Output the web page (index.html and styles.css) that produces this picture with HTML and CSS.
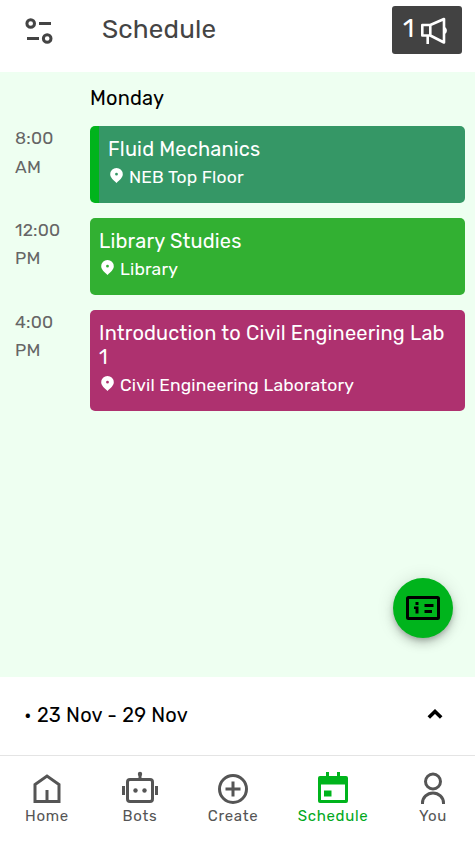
FILE: index.html
```html
<!DOCTYPE html>
<html lang="en">
<head>
	<meta charset="UTF-8">
	<title>Schedule</title>
	<meta name="viewport" content="width=device-width, initial-scale=1.0">
	<link rel="stylesheet" href="styles.css">
</head>
<body>

	<header class="topbar">
		<svg class="filter-icon" width="28" height="28" viewBox="0 0 28 28" fill="none" stroke="#444" stroke-width="3">
			<circle cx="5.7" cy="6.5" r="3.8"/>
			<path d="M14 6.5h12M2 21.5h12"/>
			<circle cx="22.2" cy="21.5" r="3.8"/>
		</svg>
		<h1>Schedule</h1>
		<button class="notices">
			<span>1</span>
			<svg width="28" height="28" viewBox="0 0 28 28" fill="none" stroke="#fff" stroke-width="2.6">
				<path d="M2.300 9h8v10.500h-8zM10.300 9l13.700-6v23.500l-13.700-7M7.700 19.500v8.500" stroke-linejoin="round"/>
				<path d="M24.500 11c3.200 1 3.200 6 0 7z" fill="#fff" stroke="none"/>
			</svg>
		</button>
	</header>

	<main class="schedule">
		<h2>Monday</h2>

		<div class="slot morning">
			<div class="time">8:00<br>AM</div>
			<div class="lesson teal current">
				<h3>Fluid Mechanics</h3>
				<p class="place">
					<svg class="pin" viewBox="0 0 13 15"><path d="M6.500 0a6.300 6.300 0 0 1 6.300 6.300c0 3.200-3 5.700-6.300 8.700c-3.300-3-6.300-5.500-6.300-8.700a6.300 6.300 0 0 1 6.300-6.300zM6.500 4.800a1.400 1.400 0 1 0 0 2.800a1.400 1.400 0 0 0 0-2.800z"/></svg>
					<span>NEB Top Floor</span>
				</p>
			</div>
		</div>

		<div class="slot">
			<div class="time">12:00<br>PM</div>
			<div class="lesson green">
				<h3>Library Studies</h3>
				<p class="place">
					<svg class="pin" viewBox="0 0 13 15"><path d="M6.500 0a6.300 6.300 0 0 1 6.300 6.300c0 3.200-3 5.700-6.300 8.700c-3.300-3-6.300-5.500-6.300-8.700a6.300 6.300 0 0 1 6.300-6.300zM6.500 4.800a1.400 1.400 0 1 0 0 2.800a1.400 1.400 0 0 0 0-2.800z"/></svg>
					<span>Library</span>
				</p>
			</div>
		</div>

		<div class="slot">
			<div class="time">4:00<br>PM</div>
			<div class="lesson berry">
				<h3>Introduction to Civil Engineering Lab 1</h3>
				<p class="place">
					<svg class="pin" viewBox="0 0 13 15"><path d="M6.500 0a6.300 6.300 0 0 1 6.300 6.300c0 3.200-3 5.700-6.300 8.700c-3.300-3-6.300-5.500-6.300-8.700a6.300 6.300 0 0 1 6.300-6.300zM6.500 4.800a1.400 1.400 0 1 0 0 2.800a1.400 1.400 0 0 0 0-2.800z"/></svg>
					<span>Civil Engineering Laboratory</span>
				</p>
			</div>
		</div>

		<button class="fab">
			<svg width="34" height="24" viewBox="0 0 34 24">
				<rect x="1.500" y="1.500" width="31" height="21" rx="1" fill="none" stroke="#000" stroke-width="3"/>
				<path d="M9.500 6h3v3h-3zM8 10.500h4.500v7h-3v-4.500h-1.500zM18.500 8h9v3h-9zM18.500 14h7.500v3h-7.500z"/>
			</svg>
		</button>
	</main>

	<section class="week">
		<span>• 23 Nov - 29 Nov</span>
		<svg width="16" height="12" viewBox="0 0 16 12" fill="none" stroke="#000" stroke-width="3.600">
			<path d="M1.800 8.500l6.200-6 6.200 6"/>
		</svg>
	</section>

	<nav class="tabs">
		<a class="tab">
			<svg viewBox="0 0 36 36" fill="none" stroke="#555" stroke-width="3">
				<path d="M6 32.500v-17l12-8.500 12 8.500v17zM18 32v-11"/>
			</svg>
			<span>Home</span>
		</a>
		<a class="tab bots">
			<svg viewBox="0 0 36 36" fill="none" stroke="#555" stroke-width="3">
				<rect x="5.500" y="10.500" width="25" height="22" rx="2.500"/>
				<path d="M18 10v-5M1.500 17v9M34.500 17v9"/>
				<g fill="#555" stroke="none">
					<circle cx="18" cy="5" r="2.200"/>
					<circle cx="13.500" cy="21.500" r="2.200"/>
					<circle cx="22.500" cy="21.500" r="2.200"/>
				</g>
			</svg>
			<span>Bots</span>
		</a>
		<a class="tab">
			<svg viewBox="0 0 36 36" fill="none" stroke="#555" stroke-width="3">
				<circle cx="18" cy="20" r="13.500"/>
				<path d="M18 12.500v15M10.500 20h15"/>
			</svg>
			<span>Create</span>
		</a>
		<a class="tab active">
			<svg viewBox="0 0 36 36" fill="#00b41c">
				<path fill-rule="evenodd" d="M5 7h6v-4h3v4h8v-4h3v4h6a2 2 0 0 1 2 2v23a2 2 0 0 1-2 2h-26a2 2 0 0 1-2-2v-23a2 2 0 0 1 2-2zM6 15.500v15.500h24v-15.500z"/>
				<path d="M9 21.500h7.500v6h-7.500z"/>
			</svg>
			<span>Schedule</span>
		</a>
		<a class="tab">
			<svg viewBox="0 0 36 36" fill="none" stroke="#555" stroke-width="3">
				<circle cx="18" cy="12.500" r="7.500"/>
				<path d="M7.500 35v-1a10.500 10 0 0 1 21 0v1"/>
			</svg>
			<span>You</span>
		</a>
	</nav>

</body>
</html>
```
FILE: styles.css
```css
* {
	box-sizing: border-box;
	margin: 0;
	padding: 0;
}

body {
	display: flex;
	flex-direction: column;
	height: 851px;
	background: #fff;
	color: #000;
	font-family: Rubik, Roboto, sans-serif;
	font-size: 20px;
	letter-spacing: .18px;
	overflow: hidden;
}

h1, h2, h3 {
	font-weight: 400;
}

button {
	border: none;
	font: inherit;
}

/* top bar */

.topbar {
	display: flex;
	height: 72px;
	padding: 6px 13px 0 25px;
}

.filter-icon {
	margin-top: 11px;
}

.topbar h1 {
	flex: 1;
	margin-left: 49px;
	font-size: 26px;
	line-height: 47px;
	letter-spacing: .15px;
	color: #444;
}

.notices {
	display: flex;
	align-items: center;
	width: 70px;
	height: 48px;
	padding-left: 11px;
	border-radius: 3px;
	background: #424242;
	color: #fff;
	font-size: 26px;
}

.notices span {
	width: 17px;
	height: 48px;
	line-height: 45px;
	text-align: left;
}

/* lessons */

.schedule {
	position: relative;
	height: 605px;
	padding: 12px 10px 0 15px;
	background: #eefff1;
}

.schedule h2 {
	height: 42px;
	padding-left: 75px;
	font-size: 20px;
	line-height: 28px;
}

.slot {
	display: flex;
	margin-bottom: 15px;
}

.time {
	width: 75px;
	height: 57px;
	margin-top: -2px;
	font-size: 17.5px;
	line-height: 28px;
	color: #666;
}

.morning .time {
	line-height: 29px;
}

.lesson {
	flex: 1;
	padding: 11px 9px 12px;
	border-radius: 5px;
	color: #fff;
}

.lesson h3 {
	font-size: 20px;
	line-height: 24px;
}

.teal {
	background: #359766;
}

.green {
	background: #32b032;
}

.berry {
	background: #ae316f;
}

.current {
	border-left: 9px solid #00b41c;
}

.place {
	display: flex;
	height: 30px;
	font-size: 17.5px;
	line-height: 32px;
	letter-spacing: .15px;
}

.pin {
	width: 13px;
	height: 15px;
	margin: 7px 6px 0 2px;
	fill: #fff;
}

.fab {
	position: absolute;
	right: 22px;
	bottom: 39px;
	display: flex;
	align-items: center;
	justify-content: center;
	width: 60px;
	height: 60px;
	border-radius: 50%;
	background: #00b41c;
	box-shadow: 0 3px 5px -1px rgba(0, 0, 0, .2), 0 6px 10px rgba(0, 0, 0, .14), 0 1px 18px rgba(0, 0, 0, .12);
}

/* week picker */

.week {
	display: flex;
	align-items: center;
	justify-content: space-between;
	height: 79px;
	padding: 0 32px 3px 24px;
	border-bottom: 1px solid #e4e4e4;
}

/* bottom tabs */

.tabs {
	display: flex;
	height: 95px;
	padding-top: 13px;
}

.tab {
	display: flex;
	flex-direction: column;
	flex-shrink: 0;
	align-items: center;
	width: 94px;
	font-size: 15px;
	line-height: 18px;
	letter-spacing: .7px;
	color: #555;
}

.bots {
	width: 92px;
}

.tab svg {
	width: 36px;
	height: 36px;
	margin-bottom: 2px;
}

.active {
	width: 106px;
	color: #00a81c;
}
```
